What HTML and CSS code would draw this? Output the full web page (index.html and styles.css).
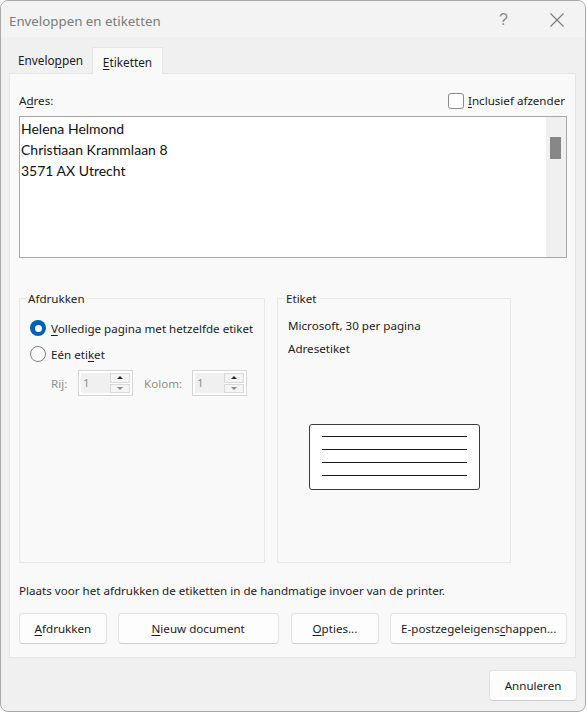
FILE: index.html
```html
<!DOCTYPE html>
<html lang="nl">
<head>
<meta charset="utf-8">
<title>Enveloppen en etiketten</title>
<link rel="stylesheet" href="styles.css">
</head>
<body>
<div class="window">
  <div class="titlebar">
    <span class="title">Enveloppen en etiketten</span>
    <span class="help">?</span>
    <svg class="close" width="16" height="16" viewBox="0 0 16 16"><path d="M1.5 1.5 L14.5 14.5 M14.5 1.5 L1.5 14.5" stroke="#7a7a7a" stroke-width="1.1" fill="none"/></svg>
  </div>
  <div class="content">
    <div class="tabs">
      <div class="tab">Envelo<u>p</u>pen</div>
      <div class="tab active"><u>E</u>tiketten</div>
    </div>
    <div class="panel">
      <div class="addr-head">
        <span>A<u>d</u>res:</span>
        <label class="check"><span class="box"></span><span><u>I</u>nclusief afzender</span></label>
      </div>
      <div class="textarea">
        <div class="addr-text">
          <div>Helena Helmond</div>
          <div>Christiaan Krammlaan 8</div>
          <div>3571 AX Utrecht</div>
        </div>
        <div class="scrollbar"><div class="thumb"></div></div>
      </div>
      <div class="groups">
        <fieldset class="group g-print">
          <legend>Afdrukken</legend>
          <div class="radio-row"><span class="radio on"></span><span><u>V</u>olledige pagina met hetzelfde etiket</span></div>
          <div class="radio-row"><span class="radio"></span><span>Eén eti<u>k</u>et</span></div>
          <div class="spins">
            <span class="spin-label">Rij:</span>
            <div class="spin"><span class="spin-val">1</span><span class="spin-btns"><span class="sb up"></span><span class="sb down"></span></span></div>
            <span class="spin-label kolom">Kolom:</span>
            <div class="spin"><span class="spin-val">1</span><span class="spin-btns"><span class="sb up"></span><span class="sb down"></span></span></div>
          </div>
        </fieldset>
        <fieldset class="group g-label">
          <legend>Etiket</legend>
          <div class="info">Microsoft, 30 per pagina</div>
          <div class="info">Adresetiket</div>
          <div class="label-pic">
            <div class="line"></div><div class="line"></div><div class="line"></div><div class="line"></div>
          </div>
        </fieldset>
      </div>
      <div class="note">Plaats voor het afdrukken de etiketten in de handmatige invoer van de printer.</div>
      <div class="buttons">
        <button class="btn b1"><u>A</u>fdrukken</button>
        <button class="btn b2"><u>N</u>ieuw document</button>
        <button class="btn b3"><u>O</u>pties...</button>
        <button class="btn b4">E-postzegeleigens<u>c</u>happen...</button>
      </div>
    </div>
    <div class="footer">
      <button class="btn cancel">Annuleren</button>
    </div>
  </div>
</div>
</body>
</html>
```

FILE: styles.css
```css
* { box-sizing: border-box; }
html, body { margin: 0; padding: 0; background: #ffffff; }
body { font-family: "Noto Sans", "Open Sans", sans-serif; font-size: 11.6px; color: #1b1b1b; }
u { text-decoration: underline; text-underline-offset: 2px; text-decoration-thickness: 1px; }

.window {
  width: 586px; height: 712px;
  border: 1px solid #a9a9a9;
  border-radius: 8px;
  background: #f0f0f0;
  overflow: hidden;
  display: flex; flex-direction: column;
}
.titlebar {
  height: 36px; flex: none;
  background: #f3f3f3;
  display: flex; align-items: center;
  padding-left: 8px;
}
.title { font-size: 13.3px; color: #7b7b7b; flex: 1; margin-top: 3px; }
.help { font-family: "Liberation Sans", sans-serif; font-size: 16px; color: #8a8a8a; width: 12px; margin-right: 38px; margin-top: 1px; }
.close { margin-right: 20px; margin-top: 2px; }

.content { flex: 1; display: flex; flex-direction: column; padding: 9px 9px 0 8px; }
.tabs { display: flex; height: 27px; }
.tab { width: 83px; display: flex; align-items: center; justify-content: center; font-size: 11.8px; color: #1b1b1b; padding-top: 1px; }
.tab.active {
  width: 71px; background: #f9f9f9;
  border: 1px solid #e6e6e6; border-bottom: none;
  position: relative; top: 1px; z-index: 1;
}
.panel {
  height: 585px;
  background: #f9f9f9;
  border: 1px solid #e6e6e6;
  padding: 0 8px 0 9px;
  display: flex; flex-direction: column;
}
.addr-head { display: flex; justify-content: space-between; align-items: center; height: 42px; padding-top: 11px; }
.check { display: flex; align-items: center; gap: 4px; margin-right: 2px; }
.box { width: 16px; height: 16px; border: 1px solid #8a8a8a; border-radius: 3px; background: #fdfdfd; }

.textarea {
  height: 142px;
  border: 1px solid #a7a7a7;
  background: #ffffff;
  display: flex;
}
.addr-text { flex: 1; font-family: "Lato", "Noto Sans", sans-serif; font-size: 14px; line-height: 21px; color: #111; padding: 1px 0 0 1px; }
.scrollbar { width: 20px; background: #f0f0f0; padding: 20px 5px 0 4px; }
.thumb { height: 22px; background: #878787; }

.groups { display: flex; gap: 12px; margin-top: 33px; height: 272px; }
.group {
  margin: 0; border: 1px solid #e8e8e8;
  padding: 0; min-width: 0;
}
.group legend { padding: 0 1px; margin-left: -3px; font-size: 11.6px; color: #1b1b1b; }
.g-print { width: 246px; padding: 9px 0 0 10px; }
.g-label { width: 234px; padding: 11px 0 0 10px; }

.radio-row { display: flex; align-items: center; gap: 5px; height: 26px; }
.radio { width: 16px; height: 16px; border-radius: 50%; border: 1px solid #7f7f7f; background: #fdfdfd; flex: none; }
.radio.on { border: none; background: #005fb8; display: flex; align-items: center; justify-content: center; }
.radio.on::after { content: ""; width: 7px; height: 7px; border-radius: 50%; background: #ffffff; }

.spins { display: flex; align-items: center; margin-top: 3px; padding-left: 21px; color: #8e8e8e; }
.spin-label { width: 27px; }
.spin-label.kolom { margin-left: 11px; width: 48px; }
.spin { width: 55px; height: 26px; border: 1px solid #d4d4d4; background: #ffffff; display: flex; padding: 2px; }
.spin-val { flex: 1; background: #f0f0f0; color: #8e8e8e; padding-left: 2px; line-height: 20px; }
.spin-btns { width: 20px; display: flex; flex-direction: column; gap: 1px; }
.sb { flex: 1; border: 1px solid #d9d9d9; background: #f4f4f4; display: flex; align-items: center; justify-content: center; }
.sb.up::after { content: ""; border-left: 3px solid transparent; border-right: 3px solid transparent; border-bottom: 3px solid #2a2a2a; }
.sb.down::after { content: ""; border-left: 3px solid transparent; border-right: 3px solid transparent; border-top: 3px solid #8a8a8a; }

.info { height: 23px; line-height: 18px; }
.label-pic {
  margin: 61px 0 0 21px;
  width: 171px; height: 66px;
  border: 1px solid #3a3a3a; border-radius: 3px;
  background: #ffffff;
  padding: 11px 0 0 12px;
  display: flex; flex-direction: column; gap: 12px;
}
.line { width: 145px; height: 1px; background: #1a1a1a; }

.note { margin-top: 20px; line-height: 16px; }
.buttons { display: flex; margin-top: 14px; }
.btn {
  font-family: "Noto Sans", "Open Sans", sans-serif; font-size: 11.6px; color: #1b1b1b;
  height: 31px; background: #fdfdfd;
  border: 1px solid #e3e3e3; border-bottom-color: #cfcfcf;
  border-radius: 4px; padding: 0;
}
.b1 { width: 88px; }
.b2 { width: 161px; margin-left: 11px; }
.b3 { width: 89px; margin-left: 12px; }
.b4 { width: 177px; margin-left: 11px; }

.footer { display: flex; justify-content: flex-end; padding: 12px 0 0; }
.cancel { width: 88px; margin-right: -1px; }
```
